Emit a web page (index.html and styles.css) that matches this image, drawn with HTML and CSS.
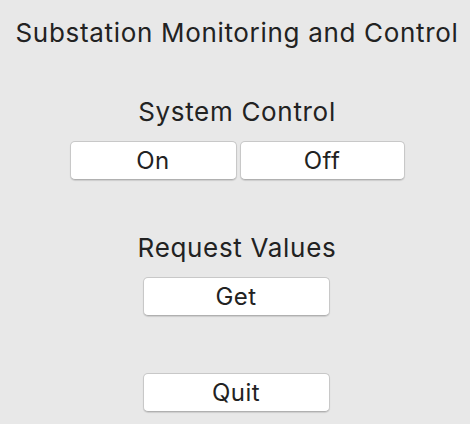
FILE: index.html
```html
<!DOCTYPE html>
<html>
<head>
<meta charset="utf-8">
<link rel="stylesheet" href="styles.css">
</head>
<body>
<div class="app">
  <div class="title">Substation Monitoring and Control</div>
  <div class="label label-first">System Control</div>
  <div class="row">
    <button class="btn btn-on">On</button>
    <button class="btn btn-off">Off</button>
  </div>
  <div class="label label-second">Request Values</div>
  <button class="btn btn-wide btn-get">Get</button>
  <button class="btn btn-wide btn-quit">Quit</button>
</div>
</body>
</html>
```

FILE: styles.css
```css
html, body {
  margin: 0;
  padding: 0;
  background: #e8e8e8;
}
body {
  width: 470px;
  height: 424px;
  overflow: hidden;
  font-family: Inter, "Noto Sans", sans-serif;
  color: #222222;
}
.app {
  display: flex;
  flex-direction: column;
  align-items: center;
  padding-top: 18px;
  padding-left: 4px;
}
.title {
  font-size: 26px;
  line-height: 30px;
  height: 30px;
  letter-spacing: 0.68px;
  white-space: nowrap;
}
.label {
  font-size: 26px;
  line-height: 30px;
  height: 30px;
  letter-spacing: 0.68px;
}
.label-first { margin-top: 49px; }
.label-second { margin-top: 53px; }
.row {
  display: flex;
  gap: 3px;
  margin-top: 14px;
}
.btn {
  box-sizing: border-box;
  height: 39px;
  background: #ffffff;
  border: 1px solid #c8c8c8;
  border-bottom-color: #b0b0b0;
  border-radius: 5px;
  box-shadow: 0 1px 1px rgba(0,0,0,0.12);
  font-family: Inter, "Noto Sans", sans-serif;
  font-size: 24px;
  letter-spacing: 0.4px;
  color: #222222;
  padding: 0;
  margin: 0;
}
.btn-on { width: 167px; }
.btn-off { width: 165px; }
.btn-wide { width: 187px; margin-left: -2px; }
.btn-get { margin-top: 14px; }
.btn-quit { margin-top: 57px; }
```
